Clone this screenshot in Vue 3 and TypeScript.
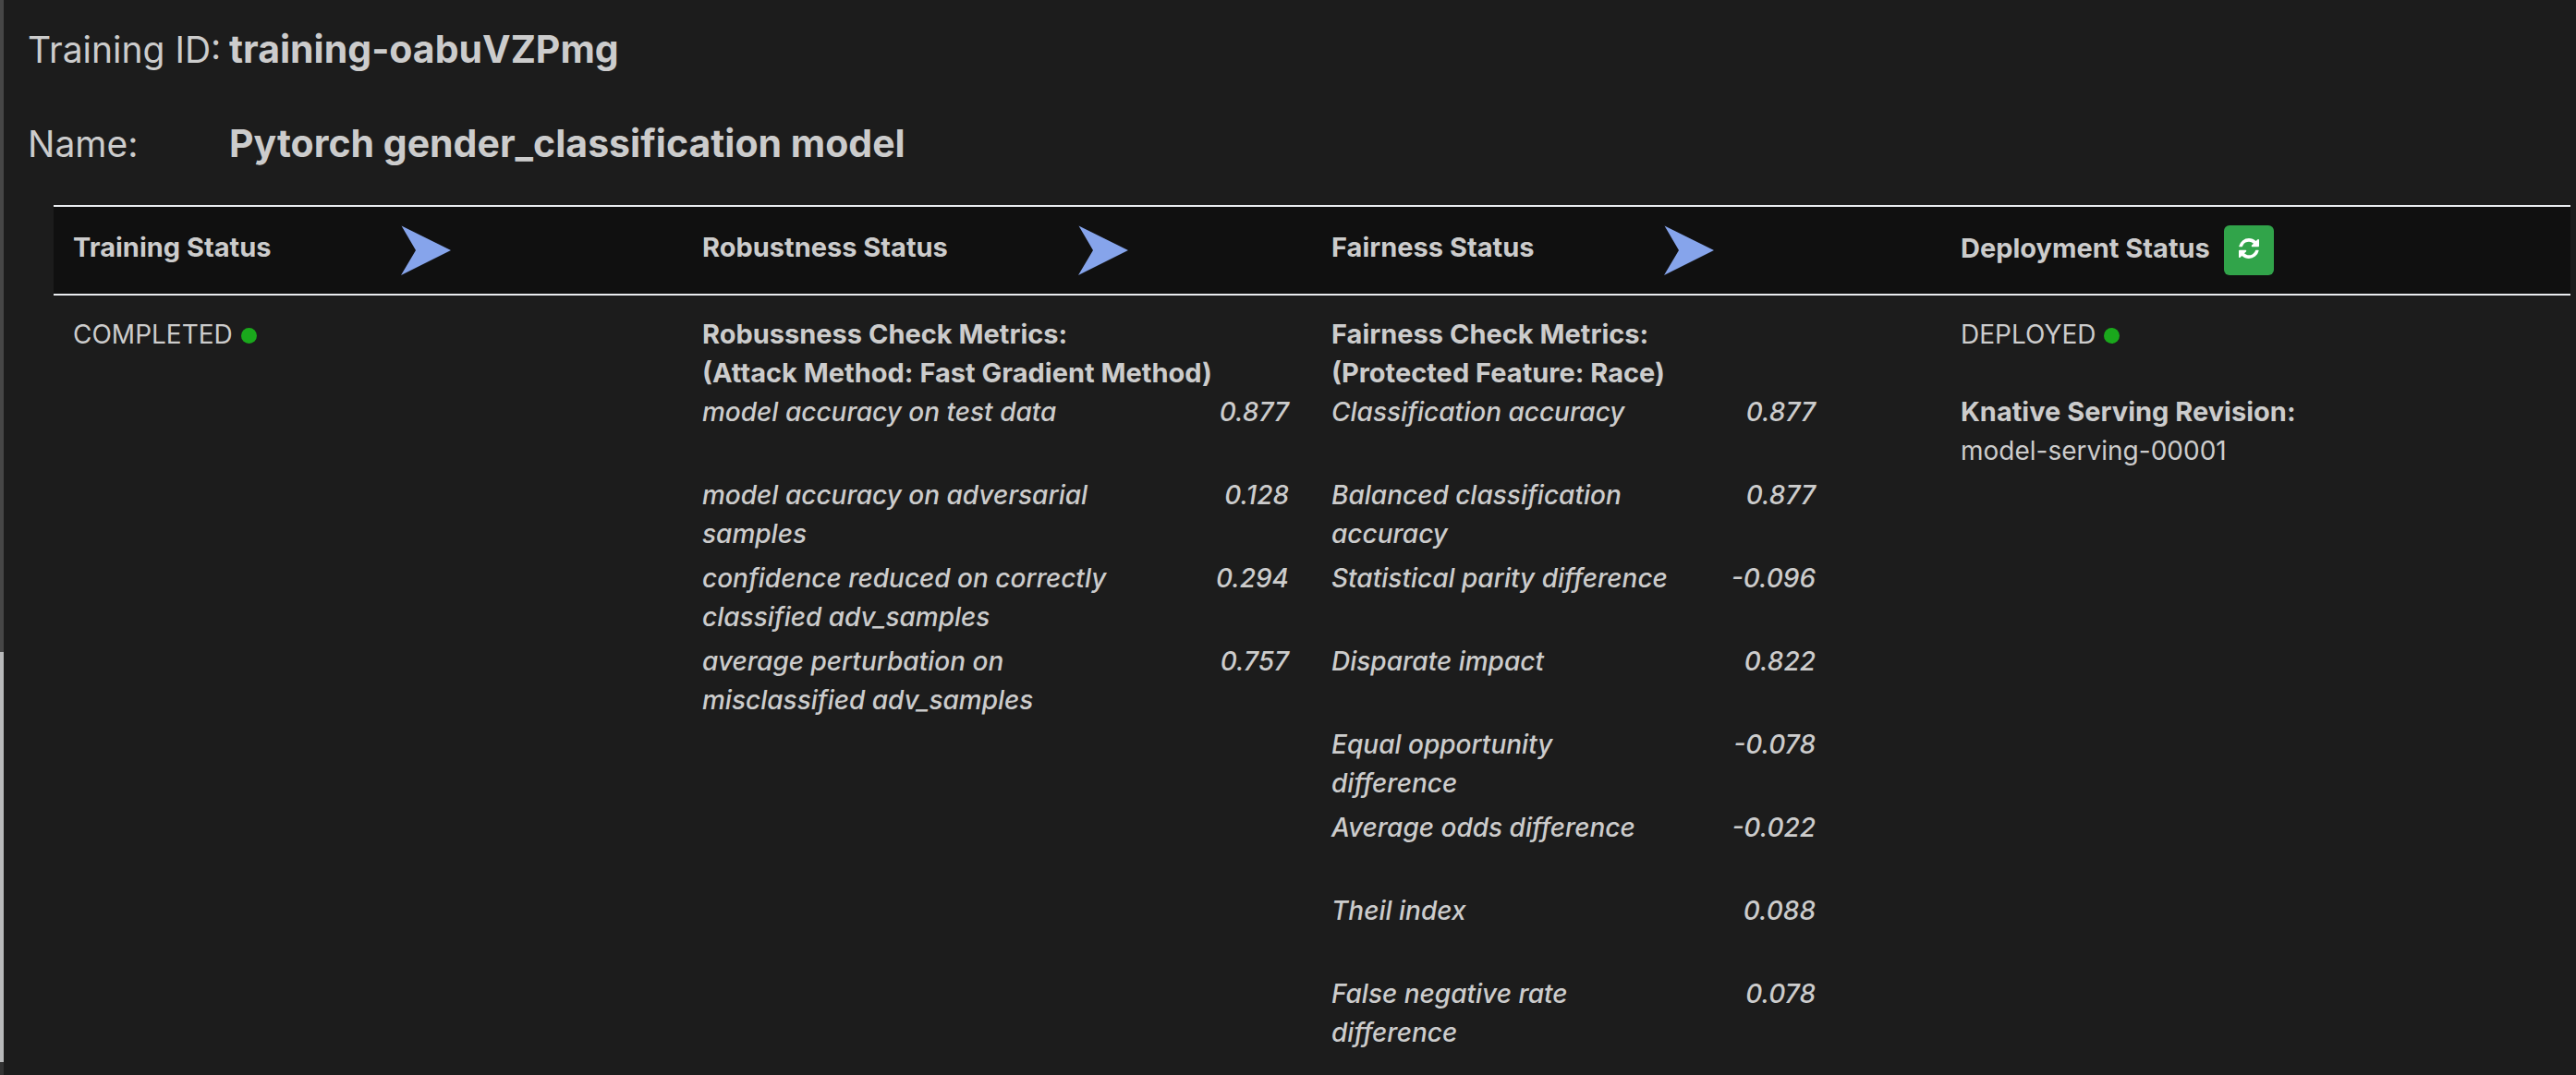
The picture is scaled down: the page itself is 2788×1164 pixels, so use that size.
<script setup lang="ts">
interface Metric {
  label: string
  value: string
}

const trainingId = 'training-oabuVZPmg'
const modelName = 'Pytorch gender_classification model'
const revision = 'model-serving-00001'

const robustness: Metric[] = [
  { label: 'model accuracy on test data', value: '0.877' },
  { label: 'model accuracy on adversarial samples', value: '0.128' },
  { label: 'confidence reduced on correctly classified adv_samples', value: '0.294' },
  { label: 'average perturbation on misclassified adv_samples', value: '0.757' },
]

const fairness: Metric[] = [
  { label: 'Classification accuracy', value: '0.877' },
  { label: 'Balanced classification accuracy', value: '0.877' },
  { label: 'Statistical parity difference', value: '-0.096' },
  { label: 'Disparate impact', value: '0.822' },
  { label: 'Equal opportunity difference', value: '-0.078' },
  { label: 'Average odds difference', value: '-0.022' },
  { label: 'Theil index', value: '0.088' },
  { label: 'False negative rate difference', value: '0.078' },
]

const stages: string[] = ['Training Status', 'Robustness Status', 'Fairness Status']
</script>

<template>
  <div class="page">
    <div class="edge" aria-hidden="true">
      <span class="edge-top"></span>
      <span class="edge-mid"></span>
      <span class="edge-end"></span>
    </div>
    <main class="content">
      <header class="summary">
        <h4 class="summary-row">
          <span class="summary-label">Training ID:</span>
          <b>{{ trainingId }}</b>
        </h4>
        <h4 class="summary-row">
          <span class="summary-label">Name:</span>
          <b>{{ modelName }}</b>
        </h4>
      </header>

      <table class="pipeline">
        <thead>
          <tr>
            <th v-for="stage in stages" :key="stage" scope="col">
              {{ stage }}
              <svg class="arrow" viewBox="0 0 54 54" aria-hidden="true">
                <path d="M0.5 0.5L54 27L0 54L16 27Z" />
              </svg>
            </th>
            <th scope="col">
              Deployment Status
              <button class="refresh" type="button" aria-label="Refresh">
                <svg viewBox="0 0 1536 1536" aria-hidden="true">
                  <path
                    d="M1511 928q0 5-1 7-64 268-268 434.500T764 1536q-146 0-282.500-55T238 1324l-129 129q-19 19-45 19t-45-19-19-45V960q0-26 19-45t45-19h448q26 0 45 19t19 45-19 45l-137 137q71 66 161 102t187 36q134 0 250-65t186-179q11-17 53-117 8-23 30-23h192q13 0 22.500 9.500t9.500 22.500zM1536 128v448q0 26-19 45t-45 19h-448q-26 0-45-19t-19-45 19-45l138-138Q969 256 768 256q-134 0-250 65T332 500q-11 17-53 117-8 23-30 23H50q-13 0-22.500-9.500T18 608v-7q65-268 270-434.500T768 0q146 0 284 55.500T1297 212l130-129q19-19 45-19t45 19 19 45z"
                  />
                </svg>
              </button>
            </th>
          </tr>
        </thead>
        <tbody>
          <tr>
            <td>COMPLETED <span class="dot"></span></td>
            <td>
              <b class="heading">Robussness Check Metrics:<br />(Attack Method: Fast Gradient Method)</b>
              <table class="metrics">
                <tbody>
                  <tr v-for="m in robustness" :key="m.label">
                    <th scope="row">{{ m.label }}</th>
                    <td>{{ m.value }}</td>
                  </tr>
                </tbody>
              </table>
            </td>
            <td>
              <b class="heading">Fairness Check Metrics:<br />(Protected Feature: Race)</b>
              <table class="metrics fairness">
                <tbody>
                  <tr v-for="m in fairness" :key="m.label">
                    <th scope="row">{{ m.label }}</th>
                    <td>{{ m.value }}</td>
                  </tr>
                </tbody>
              </table>
            </td>
            <td>
              DEPLOYED <span class="dot"></span><br /><br />
              <b class="heading">Knative Serving Revision:</b>
              {{ revision }}
            </td>
          </tr>
        </tbody>
      </table>
    </main>
  </div>
</template>

<style>
body {
  margin: 0;
  background: #1c1c1c;
}
</style>

<style scoped>
.page {
  display: flex;
  min-height: 100vh;
  background: #1c1c1c;
  color: #cccccc;
  font-family: Inter, 'Liberation Sans', sans-serif;
  font-size: 28px;
  line-height: 42px;
}
.edge {
  display: flex;
  flex-direction: column;
  flex: 0 0 4px;
}
.edge-top {
  flex: 706;
  background: #464646;
}
.edge-mid {
  flex: 444;
  background: #b8b9ba;
}
.edge-end {
  flex: 14;
  background: #333333;
}
.content {
  flex: 1;
  min-width: 0;
  padding: 28px 6px 0 26px;
}
.summary {
  display: flex;
  flex-direction: column;
  gap: 52px;
  margin-bottom: 42px;
}
.summary-row {
  display: flex;
  align-items: baseline;
  height: 50px;
  margin: 0;
  font-size: 41px;
  line-height: 50px;
  font-weight: 400;
}
.summary-label {
  flex: 0 0 218px;
  font-size: 39px;
  white-space: nowrap;
}
b {
  font-weight: 700;
}
.heading {
  display: block;
  font-size: 29px;
}
.pipeline {
  width: calc(100% - 28px);
  margin-left: 28px;
  table-layout: fixed;
  border-collapse: separate;
  border-spacing: 0;
}
.pipeline > thead th {
  padding: 20px 21px;
  border-top: 2px solid #e9ecef;
  border-bottom: 2px solid #e9ecef;
  background: #101010;
  text-align: left;
  font-size: 29px;
  font-weight: 700;
  line-height: 40px;
  white-space: nowrap;
}
.pipeline > tbody > tr > td {
  padding: 21px 21px 0;
  vertical-align: top;
}
.arrow {
  width: 54px;
  height: 54px;
  margin-left: 134px;
  vertical-align: -20px;
  fill: #86a4eb;
}
.refresh {
  width: 54px;
  height: 54px;
  margin-left: 8px;
  padding: 0 0 4px;
  border: 0;
  border-radius: 6px;
  background: #31a44a;
  vertical-align: middle;
  line-height: 0;
}
.refresh svg {
  width: 22px;
  height: 22px;
  fill: #ffffff;
}
.dot {
  display: inline-block;
  width: 17px;
  height: 17px;
  margin-left: 1px;
  border-radius: 50%;
  background: #1aa81c;
  vertical-align: baseline;
}
.metrics {
  width: 100%;
  table-layout: fixed;
  border-collapse: collapse;
  font-style: italic;
  font-weight: 500;
}
.metrics.fairness {
  width: 528px;
}
.metrics tr {
  height: 90px;
}
.metrics th {
  width: 70%;
  padding: 0;
  text-align: left;
  font-weight: 500;
  vertical-align: top;
}
.metrics td {
  padding: 0 4px 0 0;
  text-align: right;
  vertical-align: top;
}
</style>
